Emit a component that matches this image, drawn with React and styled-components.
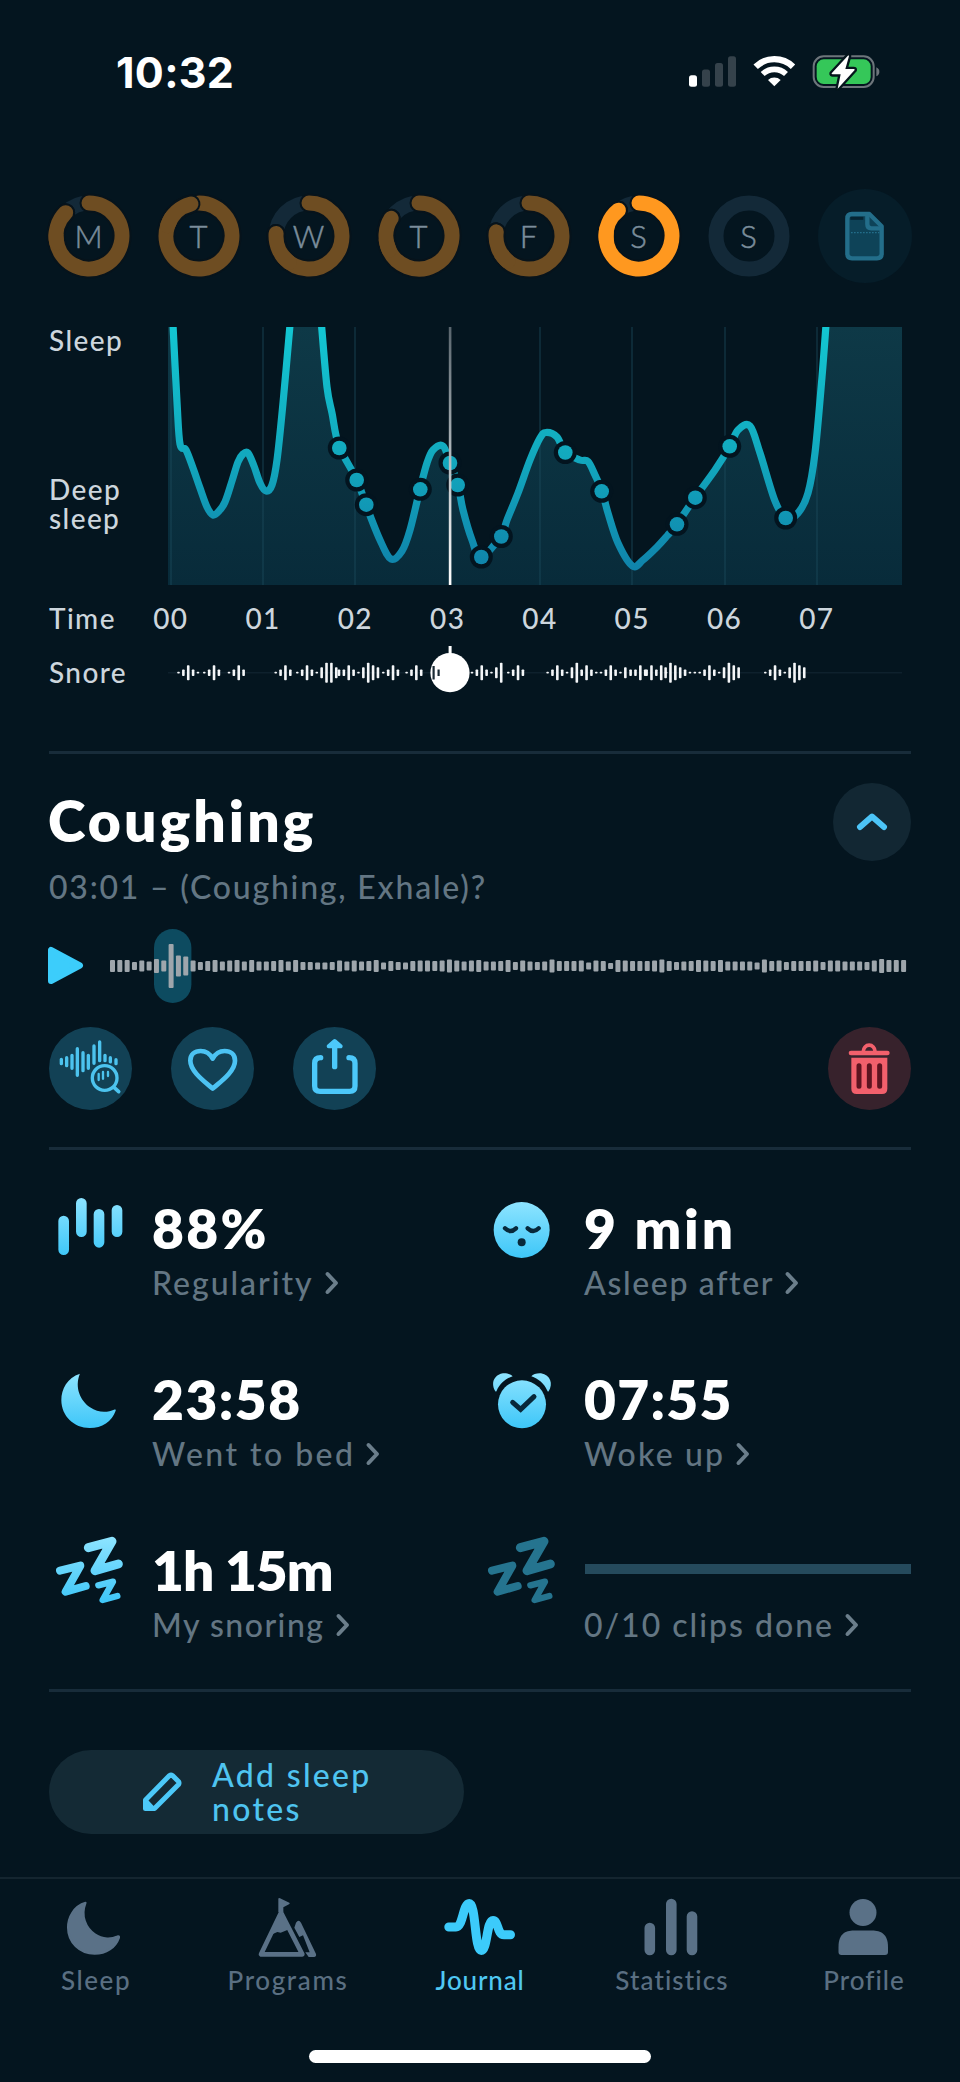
import React from "react";
import styled, { createGlobalStyle } from "styled-components";

// - Data
const days = [
  { letter: "M", progress: 0.875 },
  { letter: "T", progress: 0.961 },
  { letter: "W", progress: 0.762 },
  { letter: "T", progress: 0.84 },
  { letter: "F", progress: 0.77 },
  { letter: "S", progress: 0.893, active: true },
  { letter: "S", progress: 0 },
];

const hours = ["00", "01", "02", "03", "04", "05", "06", "07"];
const gridLines = [3, 95, 187, 372, 464, 557, 649];

const curves = [
  [[5, -2], [9, 75], [12, 117], [18, 123], [25, 141], [32, 161], [39, 180], [45, 188], [51, 184], [57, 175], [64, 154], [70, 135], [75, 127], [80, 126], [86, 139], [92, 156], [98, 164], [104, 158], [109, 133], [115, 76], [122, -2]],
  [[153.5, -2], [159, 60], [164, 86], [171, 119], [189, 153], [198, 178], [212, 213], [223, 232], [234, 224], [242, 203], [252, 162], [259, 136], [265, 123], [275, 119], [282, 136], [290, 158], [295, 183], [304, 213], [313, 230], [333, 209], [339, 193], [350, 166], [362, 133], [372, 111], [378, 105.5], [389, 110], [397, 125], [412, 133], [420, 134.5], [427, 148], [434, 164], [440, 186], [450, 216], [464.5, 239], [475, 233], [489, 220], [499, 209], [509, 197], [527, 170.5], [547, 143], [562, 119], [570, 103], [582, 99], [592, 126], [607, 174], [618, 191], [630, 186], [640, 166], [647, 126], [654, 50], [658, -2]],
];

const dots = [[171.3, 121], [188.7, 153], [198.3, 177.7], [252.3, 162.3], [282, 136], [289.7, 158], [313.3, 230], [333.3, 209.5], [397.3, 125.5], [433.7, 164.3], [509, 197.3], [527.3, 170.7], [561.7, 119.3], [617.7, 191]];

// snore marks, one string per burst: d = dot, s = small, m = medium, t = tall, x = max
const snoreSize = { d: 1.8, s: 6.5, m: 11, t: 15, x: 20 };
const snoreBursts = [
  { x: 10.5, marks: "dstsd" },
  { x: 36.3, marks: "dsts" },
  { x: 61, marks: "dsts" },
  { x: 107.7, marks: "dsts" },
  { x: 129.3, marks: "dstsdmxxm" },
  { x: 171, marks: "sstsdmxtm" },
  { x: 215.3, marks: "dsts" },
  { x: 238.6, marks: "dsts" },
  { x: 304, marks: "dstsdmx" },
  { x: 340.3, marks: "dsts" },
  { x: 379.6, marks: "dstsdmxstsd" },
  { x: 433, marks: "dstsdm" },
  { x: 462.6, marks: "ssts" },
  { x: 478.6, marks: "ststd" },
  { x: 497.6, marks: "mxtmsdddstsdmxtm" },
  { x: 597.3, marks: "dstsdmxtm" },
];

const clip = [12, 12, 12, 8, 11, 9, 14, 11, 44, 21, 19, 11, 8, 10, 12, 9, 11, 12, 9, 12, 9, 9, 10, 12, 9, 12, 8, 8, 7, 7, 8, 11, 9, 11, 9, 10, 12, 7, 10, 8, 7, 10, 11, 11, 10, 11, 13, 11, 9, 11, 12, 9, 9, 10, 12, 8, 11, 9, 8, 9, 13, 10, 10, 10, 11, 7, 11, 10, 6, 12, 11, 10, 10, 10, 11, 13, 10, 8, 9, 10, 12, 11, 10, 12, 9, 9, 9, 9, 7, 13, 10, 11, 8, 10, 10, 10, 11, 8, 11, 11, 9, 9, 9, 8, 11, 14, 12, 12, 12];

const smoothPath = (pts) =>
  pts.reduce((d, p, i) => {
    if (i === 0) return `M${p[0]} ${p[1]}`;
    const a = pts[i - 2] || pts[i - 1];
    const b = pts[i - 1];
    const n = pts[i + 1] || p;
    return `${d}C${b[0] + (p[0] - a[0]) / 6} ${b[1] + (p[1] - a[1]) / 6} ${p[0] - (n[0] - b[0]) / 6} ${p[1] - (n[1] - b[1]) / 6} ${p[0]} ${p[1]}`;
  }, "");

const areaPath =
  "M0 258V-2H5" + smoothPath(curves[0]).replace("M", "L") + "H153.5" + smoothPath(curves[1]).replace("M", "L") + "H734V258Z";

const arc = (from, to) => {
  const point = (f) => {
    const a = f * Math.PI * 2;
    return `${41 + 33 * Math.sin(a)} ${41 - 33 * Math.cos(a)}`;
  };
  return `M${point(from)}A33 33 0 ${to - from > 0.5 ? 1 : 0} 1 ${point(to)}`;
};

// - Parts
function DayRing({ letter, progress, active }) {
  const color = active ? "#ff981f" : "#6e4d22";
  return (
    <Day>
      <svg width="82" height="82" fill="none" strokeLinecap="round">
        <circle cx="41" cy="41" r="33" stroke="#132938" strokeWidth="15" />
        {progress > 0 && (
          <>
            <path d={arc(0, progress)} stroke="#07131b" strokeWidth="19" />
            <path d={arc(0, progress)} stroke={color} strokeWidth="15" />
            {/* the end cap lies over the start of the ring */}
            <path d={arc(progress - 0.08, progress)} stroke="#07131b" strokeWidth="19" />
            <path d={arc(progress - 0.16, progress)} stroke={color} strokeWidth="15" />
          </>
        )}
      </svg>
      <DayLetter>{letter}</DayLetter>
    </Day>
  );
}

function SleepChart() {
  return (
    <ChartSvg width="734" height="258" viewBox="0 0 734 258">
      <defs>
        <linearGradient id="line" gradientUnits="userSpaceOnUse" x1="0" y1="0" x2="0" y2="258">
          <stop offset="0" stopColor="#13c6d2" />
          <stop offset="0.5" stopColor="#12a9be" />
          <stop offset="1" stopColor="#0f7ea8" />
        </linearGradient>
        <linearGradient id="area" x1="0" y1="0" x2="0" y2="1">
          <stop offset="0" stopColor="#0e3947" />
          <stop offset="1" stopColor="#082b3a" />
        </linearGradient>
        <linearGradient id="cursor" gradientUnits="userSpaceOnUse" x1="0" y1="0" x2="0" y2="258">
          <stop offset="0" stopColor="#59656d" />
          <stop offset="0.6" stopColor="#c3c9cc" />
          <stop offset="1" stopColor="#fff" />
        </linearGradient>
      </defs>
      <path d={areaPath} fill="url(#area)" />
      {gridLines.map((x) => (
        <path key={x} d={`M${x} 0V258`} stroke="#1c4c5e" strokeOpacity="0.5" strokeWidth="1.6" />
      ))}
      {curves.map((pts, i) => (
        <path key={i} d={smoothPath(pts)} fill="none" stroke="url(#line)" strokeWidth="7.2" strokeLinejoin="round" />
      ))}
      {dots.map(([x, y]) => (
        <circle key={x} cx={x} cy={y} r="11.5" fill="#03141f" />
      ))}
      {dots.map(([x, y]) => (
        <circle key={x} cx={x} cy={y} r="7.3" fill="url(#line)" />
      ))}
      <rect x="280.8" width="2.6" height="258" fill="url(#cursor)" />
    </ChartSvg>
  );
}

function SnoreTrack() {
  return (
    <svg width="734" height="48" viewBox="0 0 734 48">
      <path d="M0 26.7H734" stroke="#0e212d" strokeWidth="1.5" />
      {snoreBursts.map(({ x, marks }) =>
        marks.split("").map((m, i) => (
          <rect key={x + i} x={x + i * 4.87 - 1.3} y={26.7 - snoreSize[m] / 2} width="2.6" height={snoreSize[m]} rx="0.8" fill="#f4f6f8" />
        ))
      )}
      <rect x="280.6" y="0" width="3" height="12" fill="#fff" />
      <circle cx="282" cy="26.7" r="19.6" fill="#fff" />
      <path d="M265.6 20V33.4M270.6 23.5V30" stroke="#1b2a34" strokeWidth="2.2" />
    </svg>
  );
}

function ClipWave() {
  return (
    <svg width="801" height="74" viewBox="0 0 801 74">
      <rect x="44" y="0" width="37.4" height="74" rx="18.7" fill="#0d4b60" />
      {clip.map((h, i) => (
        <rect key={i} x={i * 7.325} y={37 - h / 2} width="5" height={h} rx="1" fill="#9ea6ac" />
      ))}
    </svg>
  );
}

function Moon({ box, fill, size, edge }) {
  return (
    <svg width={size} height={size} viewBox={box} fill={fill} stroke={edge} strokeWidth="7" strokeLinejoin="round">
      <path d="M150 641C112 652 94 688 94 720C94 768 132 804 179 804C216 804 246 784 257 752C258 749 256 747 252 749C235 757 205 760 180 742C150 722 134 682 149 643Z" />
    </svg>
  );
}

const Sky = ({ id, top, bottom }) => (
  <defs>
    <linearGradient id={id} gradientUnits="userSpaceOnUse" x1="0" y1={top} x2="0" y2={bottom}>
      <stop offset="0" stopColor="#8ee4ff" />
      <stop offset="1" stopColor="#3dc6f8" />
    </linearGradient>
  </defs>
);

function Snooze({ dim }) {
  return (
    <svg width="80" height="80" viewBox="60 1116 240 240" fill="none" stroke={dim ? "#25748f" : "url(#sky3)"} strokeLinecap="round" strokeLinejoin="round">
      {!dim && <Sky id="sky3" top="1130" bottom="1330" />}
      <path d="M175 1163L246 1144L195 1232L265 1212" strokeWidth="27" />
      <path d="M90 1232L151 1217L107 1295L167 1278" strokeWidth="24" />
      <path d="M205 1276L249 1265L218 1320L262 1308" strokeWidth="19" />
    </svg>
  );
}

const RegularityIcon = () => (
  <svg width="80" height="80" viewBox="60 90 240 240" stroke="url(#sky1)" strokeWidth="32" strokeLinecap="round">
    <Sky id="sky1" top="110" bottom="290" />
    <path d="M101 183L101.1 269M154 130L154.1 215M207 163L207.1 247M261 151L261.1 215" />
  </svg>
);

const FaceIcon = () => (
  <svg width="80" height="80" viewBox="36 90 240 240">
    <Sky id="sky2" top="125" bottom="295" />
    <circle cx="155" cy="210" r="84" fill="url(#sky2)" />
    <path d="M105 205Q121 221 138 205M173 205Q190 221 206 205" fill="none" stroke="#08283a" strokeWidth="13" strokeLinecap="round" />
    <circle cx="155" cy="247" r="12" fill="#08283a" />
  </svg>
);

const BedIcon = () => (
  <>
    <svg width="0" height="0">
      <Sky id="sky4" top="640" bottom="805" />
    </svg>
    <Moon size="80" box="60 603 240 240" fill="url(#sky4)" />
  </>
);

const AlarmIcon = () => (
  <svg width="80" height="80" viewBox="36 603 240 240" fill="url(#sky5)">
    <Sky id="sky5" top="640" bottom="805" />
    <circle cx="156" cy="733" r="72" />
    <path d="M76 694C62 672 70 645 99 640C111 639 123 643 128 649C107 656 90 670 80 692C79 695 77 695 76 694Z" />
    <path d="M236 694C250 672 242 645 213 640C201 639 189 643 184 649C205 656 222 670 232 692C233 695 235 695 236 694Z" />
    <path d="M128 727L152 748L192 710" fill="none" stroke="#08283a" strokeWidth="15" strokeLinecap="round" strokeLinejoin="miter" />
  </svg>
);

const Chevron = () => (
  <svg width="14" height="24" fill="none" stroke="#6b7e8b" strokeWidth="4" strokeLinecap="round" strokeLinejoin="round">
    <path d="M2.5 3L11 12L2.5 21" />
  </svg>
);

const stats = [
  { icon: <RegularityIcon />, value: "88%", spacing: 2.4, label: "Regularity", labelSpacing: 1.96 },
  { icon: <FaceIcon />, value: "9 min", spacing: 2.9, label: "Asleep after", labelSpacing: 1.64 },
  { icon: <BedIcon />, value: "23:58", spacing: 1.5, label: "Went to bed", labelSpacing: 2.46 },
  { icon: <AlarmIcon />, value: "07:55", spacing: 1.3, label: "Woke up", labelSpacing: 2.15 },
  { icon: <Snooze />, value: "1h 15m", spacing: -1, label: "My snoring", labelSpacing: 1.5 },
  { icon: <Snooze dim />, label: "0/10 clips done", labelSpacing: 1.99 },
];

const tabs = [
  { label: "Sleep", spacing: 1.58, icon: <Moon size="64" box="81 619 205 205" fill="#5a7187" edge="#5a7187" /> },
  {
    label: "Programs",
    spacing: 1.63,
    icon: (
      <svg width="64" height="64" viewBox="648 48 192 192" fill="#5a7187">
        <path d="M715 56Q716 53 720 55L748 68Q751 71 747 73L730 82V96H715Z" />
        <path d="M723 98L663 223H787Z" fill="none" stroke="#5a7187" strokeWidth="14" strokeLinejoin="round" />
        <path d="M723 92L690 166L712 156L722 158L742 150L750 145Z" />
        <path d="M768 128Q776 117 783 128L828 222Q830 230 822 231H806L796 217H809L789 166L778 171L763 143Z" />
      </svg>
    ),
  },
  {
    label: "Journal",
    spacing: 0.84,
    active: true,
    icon: (
      <svg width="64" height="64" fill="none" stroke="#3ccbfb" strokeWidth="9" strokeLinecap="round" strokeLinejoin="round">
        <path d="M0.8 31H8C15 31 15 7.5 21.3 7.5C28 7.5 26.5 54.5 33.2 54.5C39.5 54.5 38.5 24.5 45 24.5C50.5 24.5 49 38.7 56 38.7H62.5" />
      </svg>
    ),
  },
  {
    label: "Statistics",
    spacing: 1.12,
    icon: (
      <svg width="64" height="64" stroke="#5a7187" strokeWidth="10.6" strokeLinecap="round">
        <path d="M9.8 32V54M31.3 8V54M52 20.5V54" />
      </svg>
    ),
  },
  {
    label: "Profile",
    spacing: 1,
    icon: (
      <svg width="64" height="64" fill="#5a7187">
        <circle cx="31" cy="16.5" r="13.5" />
        <path d="M6.5 56V51C6.5 38 13 34.5 22 34.5H40C49 34.5 56 38 56 51V56Q56 59 53 59H9.5Q6.5 59 6.5 56Z" />
      </svg>
    ),
  },
];

export default function App() {
  return (
    <Screen>
      <GlobalStyle />

      <StatusBar>
        <Clock>10:32</Clock>
        <StatusIcons>
          <svg width="48" height="31" viewBox="0 0 48 31">
            <rect x="0" y="19.3" width="8" height="11.5" rx="2.5" fill="#fff" />
            <rect x="13" y="13.5" width="8" height="17.3" rx="2.5" fill="#35424b" />
            <rect x="26" y="7" width="8" height="23.8" rx="2.5" fill="#35424b" />
            <rect x="39" y="0.3" width="8" height="30.5" rx="2.5" fill="#35424b" />
          </svg>
          <svg width="43" height="33" viewBox="250 44 129 99" fill="none" stroke="#fff">
            <path d="M258 79A81 81 0 0 1 370 79" strokeWidth="19" />
            <path d="M279 101A51 51 0 0 1 349 101" strokeWidth="17" />
            <path d="M314 138L295 119A28 28 0 0 1 333 119Z" fill="#fff" stroke="none" />
          </svg>
          <svg width="70" height="36" viewBox="427 40 210 108">
            <rect x="432" y="47" width="180" height="92" rx="30" fill="none" stroke="#6d757b" strokeWidth="6" />
            <rect x="441" y="56" width="162" height="74" rx="21" fill="#35c759" />
            <path d="M620 80Q630 86 629 93Q630 101 620 107Z" fill="#6d757b" />
            <path d="M536 44L486 98Q485 101 489 101H513L504 144L555 88Q556 85 552 85H527L538 46Z" fill="#fff" stroke="#05151c" strokeWidth="14" strokeLinejoin="round" paintOrder="stroke" />
          </svg>
        </StatusIcons>
      </StatusBar>

      <DayRow>
        {days.map((day, i) => (
          <DayRing key={i} {...day} />
        ))}
        <ReportButton>
          <svg width="94" height="94" viewBox="444 448 282 282" fill="none" stroke="#236e8a" strokeWidth="13">
            <path d="M546 523H598L635 560V642Q635 656 621 656H546Q532 656 532 642V537Q532 523 546 523Z" fill="#0e4358" strokeLinejoin="round" />
            <path d="M541 536H580" stroke="#062533" strokeWidth="9" />
            <path d="M592 527V554Q592 566 604 566H634" />
            <path d="M543 579H628" strokeWidth="4" strokeDasharray="5 4" />
          </svg>
        </ReportButton>
      </DayRow>

      {/* SLEEP GRAPH */}
      <ChartRow>
        <AxisLabels>
          <AxisLabel>Sleep</AxisLabel>
          <AxisLabel>
            Deep
            <br />
            sleep
          </AxisLabel>
        </AxisLabels>
        <SleepChart />
      </ChartRow>
      <TimeRow>
        <AxisLabel>Time</AxisLabel>
        <Hours>
          {hours.map((hour) => (
            <AxisLabel key={hour}>{hour}</AxisLabel>
          ))}
        </Hours>
      </TimeRow>
      <SnoreRow>
        <AxisLabel>Snore</AxisLabel>
        <SnoreTrack />
      </SnoreRow>
      <Divider $top={57} />

      {/* CLIP */}
      <ClipHeader>
        <ClipTitle>Coughing</ClipTitle>
        <CollapseButton>
          <svg width="30" height="18" fill="none" stroke="#4cc4f7" strokeWidth="6" strokeLinecap="round" strokeLinejoin="round">
            <path d="M3 14L15 3.5L27 14" />
          </svg>
        </CollapseButton>
      </ClipHeader>
      <ClipInfo>03:01 – (Coughing, Exhale)?</ClipInfo>
      <Player>
        <svg width="36" height="40" fill="#3ccdfb" stroke="#3ccdfb" strokeWidth="6" strokeLinejoin="round">
          <path d="M3 4V35L32 19.5Z" />
        </svg>
        <ClipWave />
      </Player>
      <Actions>
        <ActionButton>
          <svg width="83" height="83" viewBox="57 831 249 249" fill="none" stroke="#4cc3ee" strokeWidth="10" strokeLinecap="round">
            <path d="M94 928V941M110 923V947M126 916V955M142 896V976M159 908V962M175 916V955M192 888V940M209 876V932M225 916V932M241 923V936M258 929V941" />
            <circle cx="224" cy="984" r="46" fill="#124155" stroke="none" />
            <circle cx="224" cy="984" r="37" strokeWidth="10" />
            <path d="M252 1012L266 1025" strokeWidth="11" />
            <path d="M206 972V990M219 966V986M234 966V978" strokeWidth="7" />
          </svg>
        </ActionButton>
        <ActionButton>
          <svg width="83" height="83" viewBox="423 831 249 249" fill="none" stroke="#4cc3f3" strokeWidth="14" strokeLinejoin="round">
            <path d="M548 1016C530 999 481 966 481 932C481 914 494 903 512 903C530 903 541 913 548 926C555 913 566 903 584 903C602 903 615 914 615 932C615 966 566 999 548 1016Z" />
          </svg>
        </ActionButton>
        <ActionButton>
          <svg width="83" height="83" viewBox="789 831 249 249" fill="none" stroke="#4cc8fa" strokeWidth="16" strokeLinecap="round" strokeLinejoin="round">
            <path d="M872 923Q854 923 854 940V1008Q854 1024 870 1024H959Q975 1024 975 1008V940Q975 923 957 923" />
            <path d="M914 950V890" />
            <path d="M914 873L932 889H896Z" fill="#4cc8fa" strokeWidth="12" />
          </svg>
        </ActionButton>
        <ActionButton $danger>
          <svg width="83" height="83" viewBox="1044 831 249 249" fill="none" stroke="#f2606c" strokeLinecap="round">
            <path d="M1113 909H1222" strokeWidth="14" />
            <path d="M1150 904A17 18 0 0 1 1185 904" strokeWidth="11" />
            <path d="M1114 923H1222V1016Q1222 1032 1206 1032H1130Q1114 1032 1114 1016Z" fill="#f2606c" stroke="none" />
            <path d="M1137 947V1009M1168 947V1009M1199 947V1009" stroke="#5c1420" strokeWidth="15" />
          </svg>
        </ActionButton>
      </Actions>
      <Divider $top={37} />

      {/* STATS */}
      <Stats>
        {stats.map(({ icon, value, spacing, label, labelSpacing }) => (
          <Stat key={label}>
            <StatIcon>{icon}</StatIcon>
            <StatText>
              {value ? <StatValue $spacing={spacing}>{value}</StatValue> : <ProgressTrack />}
              <StatLabel $spacing={labelSpacing}>
                {label}
                <Chevron />
              </StatLabel>
            </StatText>
          </Stat>
        ))}
      </Stats>
      <Divider $top={47} />

      <NotesButton>
        <svg width="40" height="40" fill="none" stroke="#4cc8f8" strokeWidth="5" strokeLinejoin="round">
          <path d="M3.500 36.500V28L27.500 3.500Q29 2.500 30.500 3.500L36.500 9.500Q37.500 11 36.500 12.500L12.500 36.500Z" />
          <path d="M4 28L12 36.500H4Z" fill="#4cc8f8" strokeWidth="3" />
        </svg>
        <span>
          Add sleep
          <br />
          notes
        </span>
      </NotesButton>

      <TabBar>
        {tabs.map(({ label, spacing, icon, active }) => (
          <Tab key={label} $active={active} $spacing={spacing}>
            {icon}
            {label}
          </Tab>
        ))}
      </TabBar>
      <HomeIndicator />
    </Screen>
  );
}

// - Styled Components - //
const GlobalStyle = createGlobalStyle`
  * {
    box-sizing: border-box;
  }
  body {
    margin: 0;
    background: #04151f;
  }
  svg {
    display: block;
    flex-shrink: 0;
    overflow: visible;
  }
  button {
    border: none;
    padding: 0;
    font-family: inherit;
  }
`;

const Screen = styled.div`
  width: 960px;
  height: 2082px;
  overflow: hidden;
  display: flex;
  flex-direction: column;
  background: #04151f;
  color: #fff;
  font-family: Lato, "Open Sans", sans-serif;
  font-weight: 500;
`;

const StatusBar = styled.div`
  height: 143px;
  display: flex;
  align-items: center;
  justify-content: space-between;
  padding: 0 78px 0 116px;
`;

const Clock = styled.div`
  font: 700 43px Inter, sans-serif;
  letter-spacing: 0.3px;
`;

const StatusIcons = styled.div`
  display: flex;
  align-items: center;
  gap: 16px;
`;

const DayRow = styled.div`
  height: 94px;
  margin-top: 46px;
  padding-left: 48px;
  display: flex;
  align-items: center;
  gap: 28px;
`;

const Day = styled.div`
  width: 82px;
  height: 82px;
  display: grid;
  place-items: center;

  > * {
    grid-area: 1 / 1;
  }
`;

const DayLetter = styled.span`
  padding: 0 1px 1px 0;
  font-size: 31px;
  font-weight: 300;
  line-height: 36px;
  color: #7b8d9b;
  -webkit-text-stroke: 0.5px #7b8d9b;
`;

const ReportButton = styled.button`
  width: 94px;
  height: 94px;
  border-radius: 50%;
  background: #061d29;
`;

const ChartRow = styled.div`
  display: flex;
  margin-top: 44px;
  padding-left: 49px;
`;

const ChartSvg = styled.svg`
  overflow: hidden;
`;

const AxisLabels = styled.div`
  width: 119px;
  display: flex;
  flex-direction: column;
  gap: 120px;
  margin-top: -1px;
`;

const AxisLabel = styled.div`
  font-size: 28px;
  line-height: 29px;
  letter-spacing: 1.4px;
  color: #cdd6dd;
`;

const TimeRow = styled.div`
  display: flex;
  justify-content: space-between;
  margin-top: 19px;
  padding: 0 97px 0 49px;
`;

const Hours = styled.div`
  display: grid;
  grid-template-columns: repeat(8, 92.3px);
  text-align: center;
`;

const SnoreRow = styled.div`
  display: flex;
  height: 48px;
  margin-top: 13px;
  padding-left: 49px;

  ${AxisLabel} {
    width: 119px;
    padding-top: 12px;
  }
`;

const Divider = styled.div`
  height: 3px;
  flex-shrink: 0;
  margin: ${({ $top }) => $top}px 49px 0;
  background: #182c3a;
`;

const ClipHeader = styled.div`
  height: 78px;
  display: flex;
  justify-content: space-between;
  margin: 29px 49px 0 48px;
`;

const ClipTitle = styled.h1`
  margin: 7px 0 0;
  font-size: 57px;
  font-weight: 800;
  line-height: 60px;
  letter-spacing: 3.1px;
`;

const CollapseButton = styled.button`
  width: 78px;
  height: 78px;
  border-radius: 50%;
  background: #122733;
  display: flex;
  align-items: center;
  justify-content: center;
`;

const ClipInfo = styled.div`
  margin: 8px 49px 0;
  font-size: 32px;
  line-height: 36px;
  letter-spacing: 1.78px;
  color: #637683;
`;

const Player = styled.div`
  height: 74px;
  margin-top: 24px;
  padding-left: 48px;
  display: flex;
  align-items: center;
  gap: 26px;
`;

const Actions = styled.div`
  display: flex;
  gap: 39px;
  margin: 24px 49px 0;
`;

const ActionButton = styled.button`
  width: 83px;
  height: 83px;
  border-radius: 50%;
  background: ${({ $danger }) => ($danger ? "#37222c" : "#124155")};
  margin-left: ${({ $danger }) => ($danger ? "auto" : "0")};
`;

const Stats = styled.div`
  display: grid;
  grid-template-columns: 432px 1fr;
  grid-auto-rows: 110px;
  row-gap: 61px;
  padding: 40px 49px 0 50px;
`;

const Stat = styled.div`
  display: flex;
`;

const StatIcon = styled.div`
  width: 102px;
  flex-shrink: 0;
`;

const StatText = styled.div`
  flex: 1;
  padding-top: 8px;
`;

const StatValue = styled.div`
  font-size: 55px;
  font-weight: 800;
  line-height: 60px;
  letter-spacing: ${({ $spacing }) => $spacing}px;
  margin-bottom: 7px;
`;

const ProgressTrack = styled.div`
  height: 10px;
  margin: 24px 0 33px 1px;
  background: #254a5c;
`;

const StatLabel = styled.div`
  display: flex;
  align-items: center;
  gap: 11px;
  font-size: 32px;
  line-height: 36px;
  letter-spacing: ${({ $spacing }) => $spacing}px;
  color: #637683;
`;

const NotesButton = styled.button`
  width: 415px;
  height: 84px;
  flex-shrink: 0;
  margin: 58px 0 0 49px;
  padding: 0 0 1px 93px;
  display: flex;
  align-items: center;
  gap: 30px;
  border-radius: 42px;
  background: #142a35;
  color: #4fc4f0;
  font-size: 32px;
  font-weight: 500;
  line-height: 34px;
  letter-spacing: 2.3px;
  text-align: left;
`;

const TabBar = styled.nav`
  height: 173px;
  flex-shrink: 0;
  margin-top: 43px;
  padding-top: 17px;
  display: grid;
  grid-template-columns: repeat(5, 192px);
  border-top: 2px solid #14252f;
`;

const Tab = styled.div`
  display: flex;
  flex-direction: column;
  align-items: center;
  gap: 5px;
  font-size: 26px;
  line-height: 30px;
  letter-spacing: ${({ $spacing }) => $spacing}px;
  color: ${({ $active }) => ($active ? "#4fc8f2" : "#5a6f82")};
`;

const HomeIndicator = styled.div`
  width: 342px;
  height: 13px;
  flex-shrink: 0;
  align-self: center;
  border-radius: 7px;
  background: #fff;
`;
